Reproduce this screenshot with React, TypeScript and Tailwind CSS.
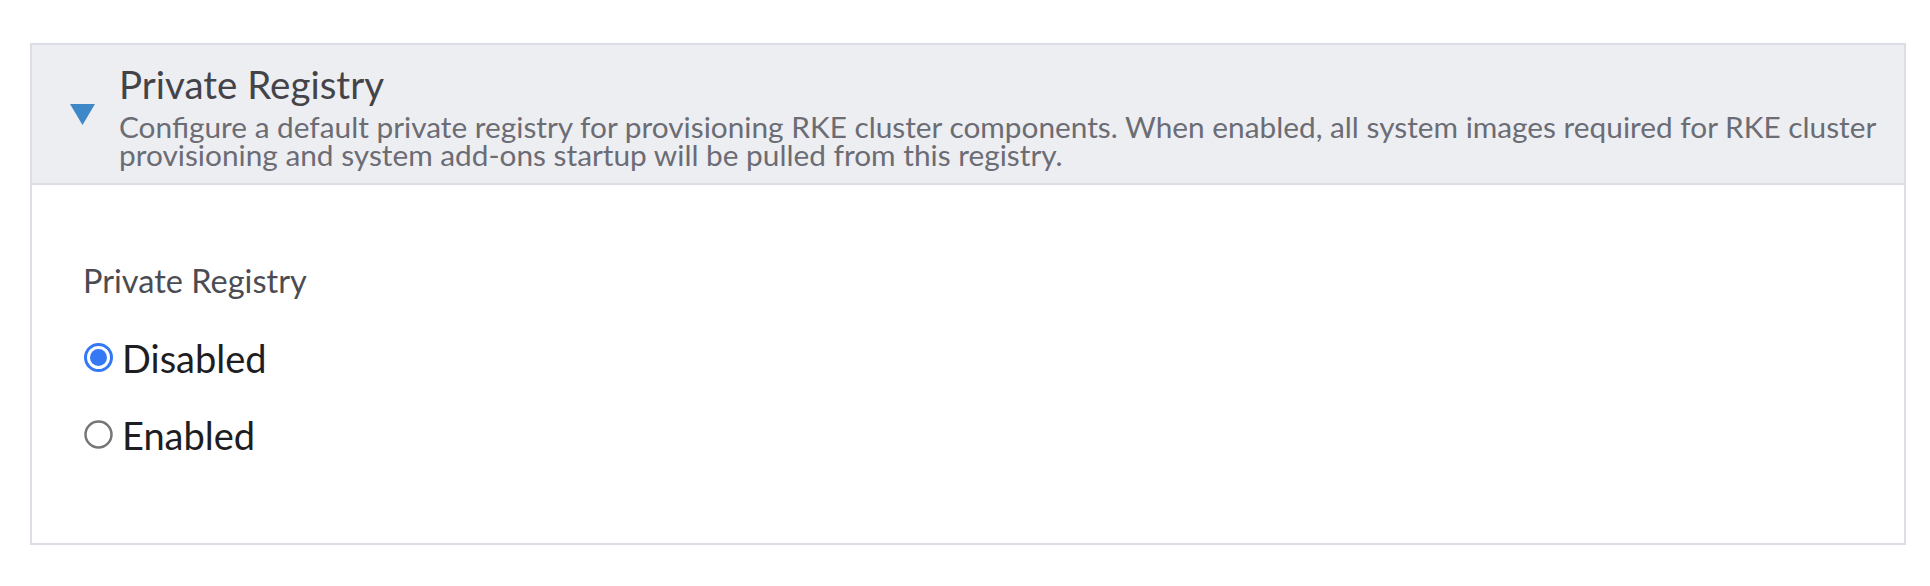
function CaretDown() {
  return (
    <svg width="25" height="21" viewBox="0 0 25 21" aria-hidden="true" className="shrink-0">
      <polygon points="0,0 25,0 12.5,21" fill="#3f88c8" />
    </svg>
  )
}

function RadioDot({ checked }: { checked: boolean }) {
  return (
    <svg width="29" height="29" viewBox="0 0 29 29" aria-hidden="true" className="shrink-0">
      {checked ? (
        <>
          <circle cx="14.5" cy="14.5" r="13" fill="#fff" stroke="#3478f6" strokeWidth="3" />
          <circle cx="14.5" cy="14.5" r="8.5" fill="#3478f6" />
        </>
      ) : (
        <circle cx="14.5" cy="14.5" r="13" fill="#fff" stroke="#767676" strokeWidth="2.5" />
      )}
    </svg>
  )
}

const options = [
  { label: 'Disabled', checked: true },
  { label: 'Enabled', checked: false },
]

export default function App() {
  return (
    <div
      className="w-[1930px] h-[586px] bg-white pt-[43px] pl-[30px]"
      style={{ fontFamily: 'Lato, "Open Sans", sans-serif' }}
    >
      <div className="w-[1876px] h-[502px] border-2 border-[#dcdee6] flex flex-col">
        {/* Accordion header */}
        <div className="h-[140px] bg-[#edeef2] border-b-2 border-[#dcdee6] flex items-center pl-[38px] pr-[12px]">
          <CaretDown />
          <div className="ml-[24px] mt-[3px] flex flex-col">
            <div className="text-[38.5px] leading-[44px] text-[#444448]">Private Registry</div>
            <div className="mt-[7px] text-[29.8px] leading-[28.4px] text-[#6b6c74] whitespace-nowrap">
              Configure a default private registry for provisioning RKE cluster components. When enabled, all system images required for RKE cluster
              <br />
              provisioning and system add-ons startup will be pulled from this registry.
            </div>
          </div>
        </div>

        {/* Body */}
        <div className="flex-1 bg-white pt-[77px] pl-[51px]">
          <div className="text-[32.5px] leading-[38px] text-[#4b4c53]">Private Registry</div>
          <div className="mt-[37px] flex flex-col gap-[34px]">
            {options.map((opt) => (
              <label key={opt.label} className="flex items-center h-[43px]">
                <span className="ml-[1px] -mt-[2px] flex">
                  <RadioDot checked={opt.checked} />
                </span>
                <span className="ml-[9px] text-[38px] leading-[43px] text-[#1d1d22]">{opt.label}</span>
              </label>
            ))}
          </div>
        </div>
      </div>
    </div>
  )
}
